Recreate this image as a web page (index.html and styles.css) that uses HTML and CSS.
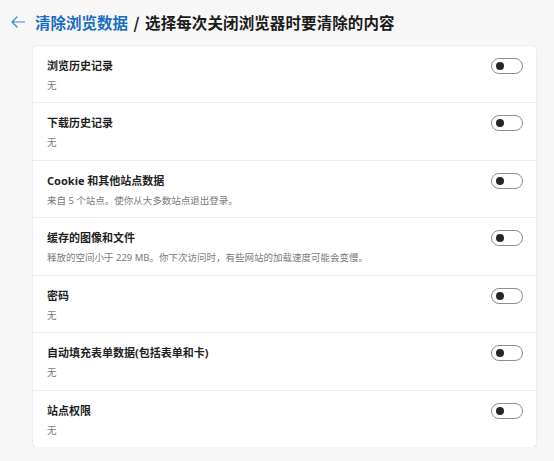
FILE: index.html
```html
<!DOCTYPE html>
<html lang="zh-CN">
<head>
<meta charset="utf-8">
<link rel="stylesheet" href="styles.css">
</head>
<body>
<div class="page">
  <header class="head">
    <svg class="back" width="14" height="12" viewBox="0 0 14 12"><path d="M13.5 6H1M6 1L1 6l5 5" fill="none" stroke="#3b86cf" stroke-width="1.2" stroke-linecap="round" stroke-linejoin="round"/></svg>
    <h1 class="title"><span class="crumb">清除浏览数据</span><span class="sep"> / </span><span class="cur">选择每次关闭浏览器时要清除的内容</span></h1>
  </header>
  <section class="card">
    <div class="row"><div class="txt"><div class="name">浏览历史记录</div><div class="desc">无</div></div><span class="toggle"></span></div>
    <div class="row"><div class="txt"><div class="name">下载历史记录</div><div class="desc">无</div></div><span class="toggle"></span></div>
    <div class="row"><div class="txt"><div class="name">Cookie 和其他站点数据</div><div class="desc">来自 5 个站点。使你从大多数站点退出登录。</div></div><span class="toggle"></span></div>
    <div class="row"><div class="txt"><div class="name">缓存的图像和文件</div><div class="desc">释放的空间小于 229 MB。你下次访问时，有些网站的加载速度可能会变慢。</div></div><span class="toggle"></span></div>
    <div class="row"><div class="txt"><div class="name">密码</div><div class="desc">无</div></div><span class="toggle"></span></div>
    <div class="row"><div class="txt"><div class="name">自动填充表单数据(包括表单和卡)</div><div class="desc">无</div></div><span class="toggle"></span></div>
    <div class="row"><div class="txt"><div class="name">站点权限</div><div class="desc">无</div></div><span class="toggle"></span></div>
  </section>
</div>
</body>
</html>
```
FILE: styles.css
```css
html, body {
  margin: 0;
  padding: 0;
  background: #f7f7f7;
}
body {
  font-family: "Noto Sans", "Noto Sans CJK SC", sans-serif;
  color: #1b1b1b;
}
.page {
  padding: 12px 18px 0 11px;
}
.head {
  display: flex;
  align-items: center;
  gap: 10px;
  height: 20px;
}
.back {
  display: block;
  flex: none;
}
.title {
  margin: 0;
  font-size: 15.5px;
  font-weight: 700;
  line-height: 20px;
  white-space: nowrap;
  font-family: "Noto Sans CJK SC", sans-serif;
}
.crumb {
  color: #1a6fc0;
}
.sep {
  color: #1b1b1b;
  margin: 0 2px;
}
.cur {
  color: #1b1b1b;
  letter-spacing: 0.1px;
}
.card {
  margin: 13.5px 0 0 22px;
  width: 503px;
  background: #fff;
  border-radius: 4px;
  box-shadow: 0 0.5px 2px rgba(0,0,0,0.14);
}
.row {
  display: flex;
  align-items: flex-start;
  justify-content: space-between;
  padding: 12px 13px 9.5px 14px;
  border-bottom: 1px solid #ededed;
}
.row:last-child {
  border-bottom: none;
}
.name {
  font-size: 11px;
  line-height: 16px;
  font-weight: 700;
  color: #1f1f1f;
}
.desc {
  margin-top: 5px;
  font-size: 9.5px;
  line-height: 14px;
  color: #7a7a7a;
}
.toggle {
  position: relative;
  flex: none;
  width: 30px;
  height: 14px;
  border: 1px solid #8d8d8d;
  border-radius: 9px;
  margin-top: 0;
}
.toggle::after {
  content: "";
  position: absolute;
  left: 4px;
  top: 3px;
  width: 8px;
  height: 8px;
  border-radius: 50%;
  background: #262626;
}
```
